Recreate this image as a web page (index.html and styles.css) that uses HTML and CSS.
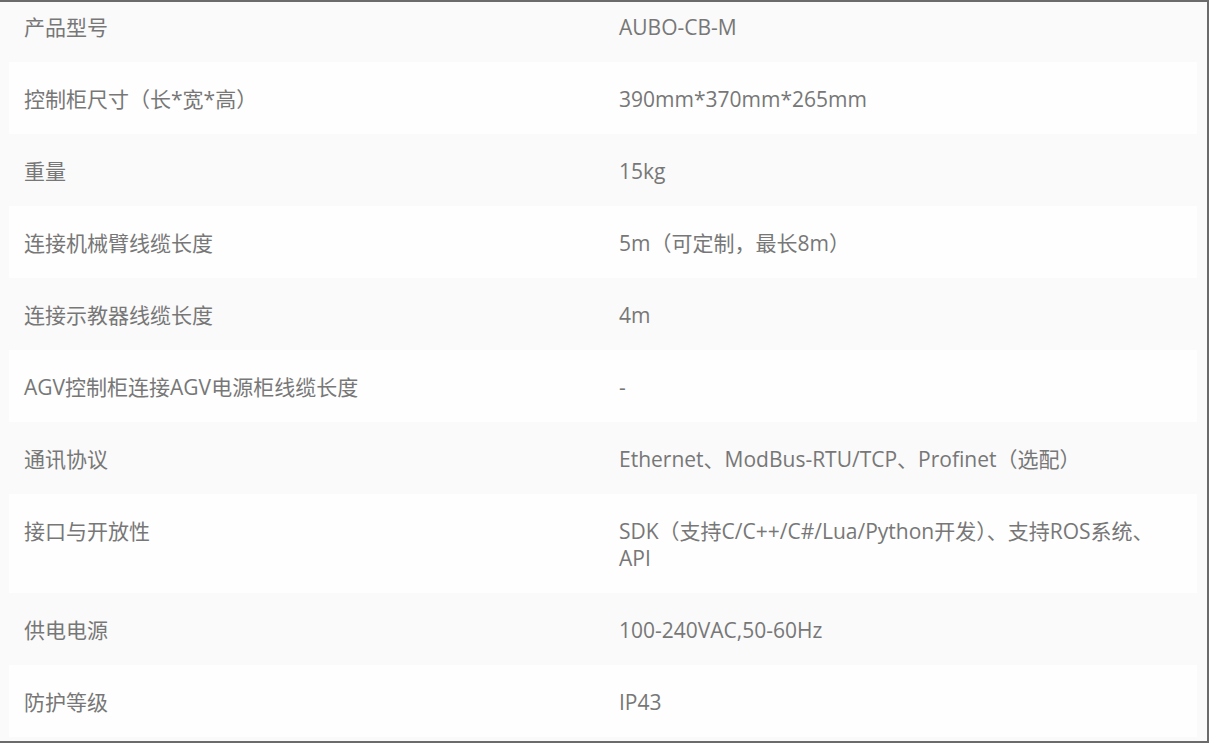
FILE: index.html
```html
<!DOCTYPE html>
<html lang="zh-CN">
<head>
<meta charset="utf-8">
<title>参数</title>
<link rel="stylesheet" href="styles.css">
</head>
<body>
<div class="frame">
  <div class="table">
    <div class="row first"><div class="cell label">产品型号</div><div class="cell value">AUBO-CB-M</div></div>
    <div class="row alt"><div class="cell label">控制柜尺寸（长*宽*高）</div><div class="cell value">390mm*370mm*265mm</div></div>
    <div class="row"><div class="cell label">重量</div><div class="cell value">15kg</div></div>
    <div class="row alt"><div class="cell label">连接机械臂线缆长度</div><div class="cell value">5m（可定制，最长8m）</div></div>
    <div class="row"><div class="cell label">连接示教器线缆长度</div><div class="cell value">4m</div></div>
    <div class="row alt"><div class="cell label">AGV控制柜连接AGV电源柜线缆长度</div><div class="cell value">-</div></div>
    <div class="row"><div class="cell label">通讯协议</div><div class="cell value">Ethernet、ModBus-RTU/TCP、Profinet（选配）</div></div>
    <div class="row alt"><div class="cell label">接口与开放性</div><div class="cell value">SDK（支持C/C++/C#/Lua/Python开发）、支持ROS系统、API</div></div>
    <div class="row"><div class="cell label">供电电源</div><div class="cell value">100-240VAC,50-60Hz</div></div>
    <div class="row alt"><div class="cell label">防护等级</div><div class="cell value">IP43</div></div>
  </div>
</div>
</body>
</html>
```

FILE: styles.css
```css
html, body {
  margin: 0;
  padding: 0;
  background: #fafafa;
}
.frame {
  box-sizing: border-box;
  width: 1209px;
  height: 743px;
  border-top: 2px solid #6b6b6b;
  border-right: 2px solid #6b6b6b;
  border-bottom: 2px solid #6b6b6b;
  background: #fafafa;
  overflow: hidden;
}
.table {
  margin: -12px 10px 0 9px;
  font-family: "Open Sans", "Noto Sans CJK SC", sans-serif;
  font-size: 21px;
  line-height: 27px;
  color: #777777;
}
.row {
  display: grid;
  grid-template-columns: 595px 1fr;
  background: #fafafa;
}
.row.alt {
  background: #fefefe;
}
.cell {
  padding: 24px 15px 21px 15px;
}
```
